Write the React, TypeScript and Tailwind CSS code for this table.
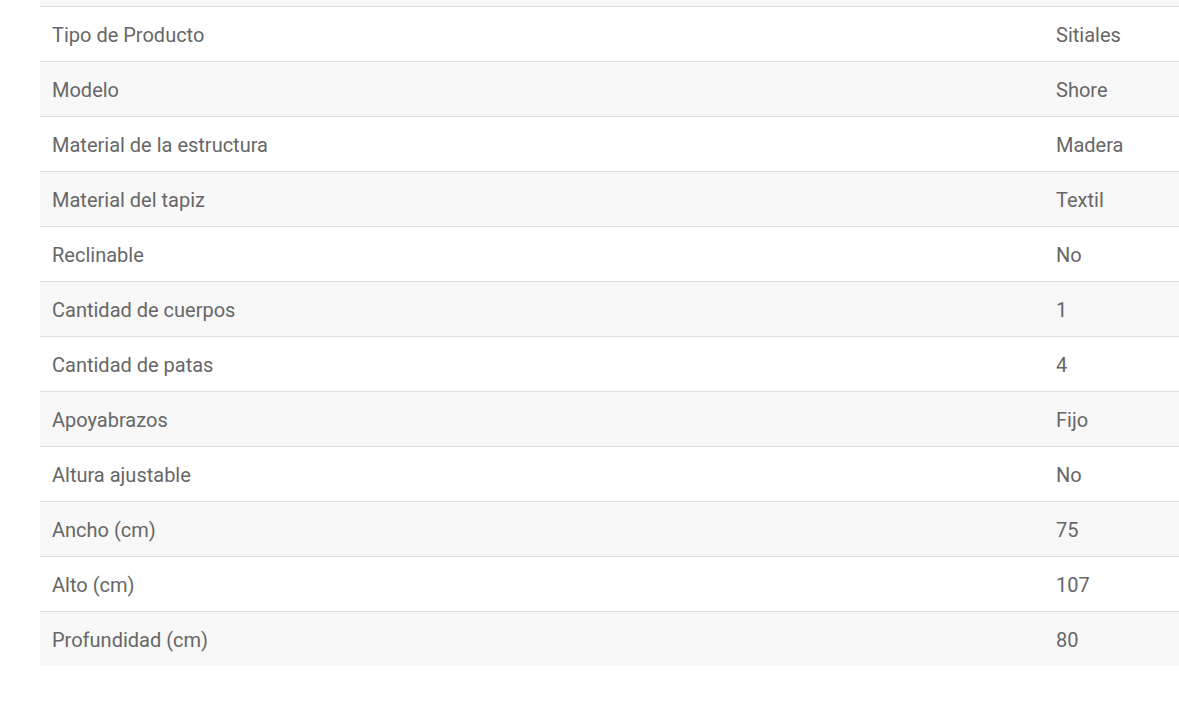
import React from "react";

const specs: [string, string][] = [
  ["Tipo de Producto", "Sitiales"],
  ["Modelo", "Shore"],
  ["Material de la estructura", "Madera"],
  ["Material del tapiz", "Textil"],
  ["Reclinable", "No"],
  ["Cantidad de cuerpos", "1"],
  ["Cantidad de patas", "4"],
  ["Apoyabrazos", "Fijo"],
  ["Altura ajustable", "No"],
  ["Ancho (cm)", "75"],
  ["Alto (cm)", "107"],
  ["Profundidad (cm)", "80"],
];

export default function App() {
  return (
    <div className="w-[1179px] h-[712px] bg-white overflow-hidden pl-10 font-['Roboto',sans-serif] text-[#676767] text-[20px]">
      {/* tail of the previous row, page is scrolled */}
      <div className="h-[6px] bg-[#f8f8f8]" />
      {specs.map(([label, value], i) => (
        <div
          key={label}
          className={`flex items-center h-[55px] pt-[2px] border-t border-[#dedede] ${
            i % 2 === 1 ? "bg-[#f8f8f8]" : "bg-white"
          }`}
        >
          <div className="flex-1 px-3">{label}</div>
          <div className="w-[135px] px-3">{value}</div>
        </div>
      ))}
    </div>
  );
}
